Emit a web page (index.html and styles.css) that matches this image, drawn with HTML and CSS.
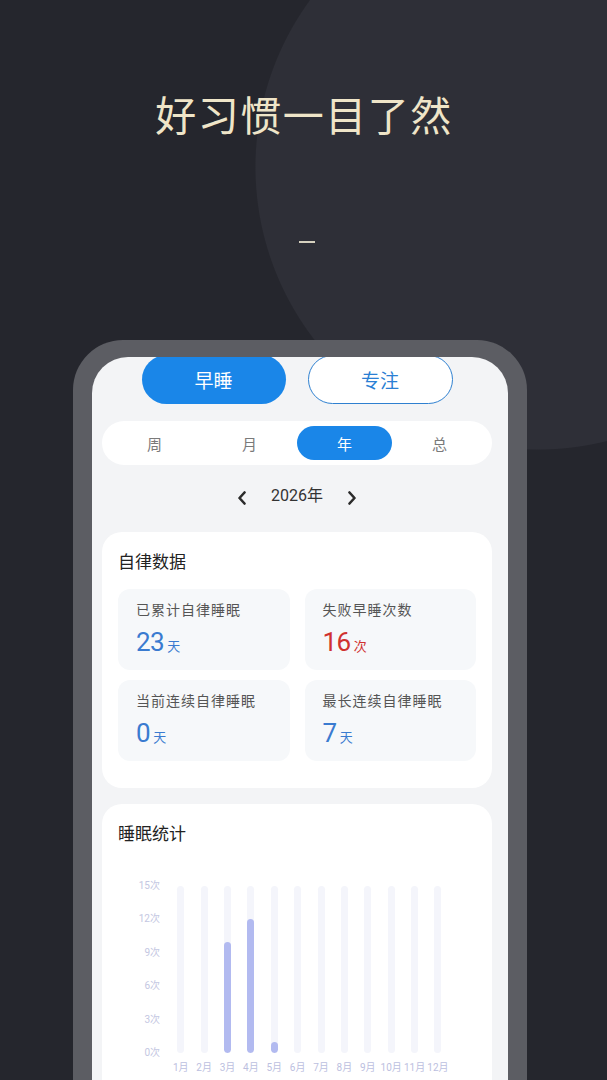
FILE: index.html
```html
<!DOCTYPE html>
<html lang="zh-CN">
<head>
<meta charset="utf-8">
<title>好习惯一目了然</title>
<link rel="stylesheet" href="styles.css">
</head>
<body>
<div class="page">
  <header class="hero">
    <h1 class="hero-title">好习惯一目了然</h1>
    <div class="hero-dash"></div>
  </header>

  <div class="phone">
    <div class="screen">
      <div class="mode-row">
        <div class="mode-btn mode-active">早睡</div>
        <div class="mode-btn mode-outline">专注</div>
      </div>

      <div class="tabs">
        <div class="tab">周</div>
        <div class="tab">月</div>
        <div class="tab tab-active">年</div>
        <div class="tab">总</div>
      </div>

      <div class="year-nav">
        <svg class="chev" viewBox="0 0 10 14" width="10" height="14"><path d="M7.5 1.5 L2.5 7 L7.5 12.5" fill="none" stroke="#2b2b2b" stroke-width="2.6" stroke-linecap="round" stroke-linejoin="round"/></svg>
        <span class="year-text">2026年</span>
        <svg class="chev" viewBox="0 0 10 14" width="10" height="14"><path d="M2.5 1.5 L7.5 7 L2.5 12.5" fill="none" stroke="#2b2b2b" stroke-width="2.6" stroke-linecap="round" stroke-linejoin="round"/></svg>
      </div>

      <section class="card card-stats">
        <h2 class="card-title">自律数据</h2>
        <div class="stats">
          <div class="stat">
            <div class="stat-label">已累计自律睡眠</div>
            <div class="stat-value blue"><span class="num">23</span><span class="unit">天</span></div>
          </div>
          <div class="stat">
            <div class="stat-label">失败早睡次数</div>
            <div class="stat-value red"><span class="num">16</span><span class="unit">次</span></div>
          </div>
          <div class="stat">
            <div class="stat-label">当前连续自律睡眠</div>
            <div class="stat-value blue"><span class="num">0</span><span class="unit">天</span></div>
          </div>
          <div class="stat">
            <div class="stat-label">最长连续自律睡眠</div>
            <div class="stat-value blue"><span class="num">7</span><span class="unit">天</span></div>
          </div>
        </div>
      </section>

      <section class="card card-chart">
        <h2 class="card-title">睡眠统计</h2>
        <div class="chart">
          <div class="y-axis">
            <span>15次</span><span>12次</span><span>9次</span><span>6次</span><span>3次</span><span>0次</span>
          </div>
          <div class="cols">
            <div class="col"><div class="track"></div><div class="mlabel">1月</div></div>
            <div class="col"><div class="track"></div><div class="mlabel">2月</div></div>
            <div class="col"><div class="track"><div class="fill" style="height:111px"></div></div><div class="mlabel">3月</div></div>
            <div class="col"><div class="track"><div class="fill" style="height:134px"></div></div><div class="mlabel">4月</div></div>
            <div class="col"><div class="track"><div class="fill" style="height:11px"></div></div><div class="mlabel">5月</div></div>
            <div class="col"><div class="track"></div><div class="mlabel">6月</div></div>
            <div class="col"><div class="track"></div><div class="mlabel">7月</div></div>
            <div class="col"><div class="track"></div><div class="mlabel">8月</div></div>
            <div class="col"><div class="track"></div><div class="mlabel">9月</div></div>
            <div class="col"><div class="track"></div><div class="mlabel">10月</div></div>
            <div class="col"><div class="track"></div><div class="mlabel">11月</div></div>
            <div class="col"><div class="track"></div><div class="mlabel">12月</div></div>
          </div>
        </div>
      </section>
    </div>
  </div>
</div>
</body>
</html>
```

FILE: styles.css
```css
* { box-sizing: border-box; }

html, body {
  margin: 0;
  padding: 0;
}

body {
  width: 607px;
  height: 1080px;
  overflow: hidden;
  background-color: #25262d;
  background-image: radial-gradient(circle 283px at 538px 167px, #2e2f37 282px, #25262d 283px);
  background-repeat: no-repeat;
  font-family: "Roboto", "Noto Sans CJK SC", sans-serif;
}

.page {
  display: flex;
  flex-direction: column;
}

.hero {
  display: flex;
  flex-direction: column;
  align-items: center;
  padding-top: 89px;
}

.hero-title {
  margin: 0;
  font-family: "Noto Sans CJK SC", sans-serif;
  font-weight: 400;
  font-size: 41px;
  line-height: 48px;
  letter-spacing: 1.5px;
  color: #efe5c8;
  padding-left: 1px;
}

.hero-dash {
  margin-top: 104px;
  width: 16px;
  height: 2px;
  background: #d6d1bf;
  margin-left: 6px;
}

.phone {
  margin: 97px 0 0 73px;
  width: 454px;
  height: 760px;
  background: #5c5d63;
  border-radius: 50px 50px 0 0;
  padding: 17px 19px 0 19px;
}

.screen {
  height: 100%;
  background: #f3f4f6;
  border-radius: 36px 36px 0 0;
  overflow: hidden;
  padding: 0 16px 0 10px;
}

.mode-row {
  display: flex;
  justify-content: center;
  gap: 22px;
  margin-top: -2px;
}

.mode-btn {
  width: 144px;
  height: 49px;
  border-radius: 25px;
  display: flex;
  align-items: center;
  justify-content: center;
  font-family: "Noto Sans CJK SC", sans-serif;
  font-size: 19px;
}

.mode-active {
  background: #1a86e8;
  color: #ffffff;
}

.mode-outline {
  background: #ffffff;
  border: 1px solid #2f80d0;
  color: #2a7fd4;
  width: 145px;
}

.tabs {
  margin-top: 17px;
  height: 44px;
  background: #ffffff;
  border-radius: 22px;
  padding: 5px;
  display: flex;
}

.tab {
  flex: 1;
  display: flex;
  align-items: center;
  justify-content: center;
  border-radius: 18px;
  font-family: "Noto Sans CJK SC", sans-serif;
  font-size: 15px;
  color: #7a7a7a;
}

.tab-active {
  background: #1a86e8;
  color: #ffffff;
}

.year-nav {
  margin-top: 20px;
  height: 22px;
  display: flex;
  align-items: center;
  justify-content: center;
  gap: 24px;
}

.chev {
  display: block;
  margin-top: 3px;
}

.year-text {
  font-size: 16px;
  line-height: 22px;
  color: #333333;
}

.card {
  background: #ffffff;
  border-radius: 20px;
  padding: 17px 16px 27px 16px;
}

.card-stats { margin-top: 25px; }

.card-chart {
  margin-top: 16px;
  padding-bottom: 40px;
}

.card-title {
  margin: 0;
  font-family: "Noto Sans CJK SC", sans-serif;
  font-weight: 400;
  font-size: 17px;
  line-height: 24px;
  color: #222222;
}

.stats {
  margin-top: 16px;
  display: grid;
  grid-template-columns: 1fr 1fr;
  column-gap: 15px;
  row-gap: 10px;
}

.stat {
  height: 81px;
  background: #f6f8fa;
  border-radius: 12px;
  padding: 10px 18px 0 18px;
}

.stat-label {
  font-family: "Noto Sans CJK SC", sans-serif;
  font-size: 14px;
  line-height: 20px;
  letter-spacing: 1px;
  color: #555555;
}

.stat-value {
  margin-top: 8px;
  display: flex;
  align-items: baseline;
  gap: 3px;
}

.num {
  font-size: 26px;
  line-height: 30px;
  letter-spacing: -0.5px;
}

.unit {
  font-family: "Noto Sans CJK SC", sans-serif;
  font-size: 13px;
}

.blue { color: #3a7bd0; }
.red { color: #d0312f; }

.chart {
  margin-top: 34px;
  display: flex;
  align-items: flex-start;
}

.y-axis {
  width: 42px;
  height: 181px;
  display: flex;
  flex-direction: column;
  justify-content: space-between;
  align-items: flex-end;
  font-size: 10px;
  line-height: 14px;
  color: #c4c7e2;
}

.cols {
  margin-left: 9px;
  margin-top: 7px;
  display: flex;
}

.col {
  width: 23.4px;
  display: flex;
  flex-direction: column;
  align-items: center;
}

.track {
  width: 7px;
  height: 167px;
  border-radius: 4px;
  background: #f4f5fb;
  display: flex;
  flex-direction: column;
  justify-content: flex-end;
  overflow: hidden;
}

.fill {
  width: 7px;
  border-radius: 4px;
  background: #b2baf0;
}

.mlabel {
  margin-top: 8px;
  font-size: 10px;
  line-height: 14px;
  color: #bcc0e0;
  white-space: nowrap;
}
```
